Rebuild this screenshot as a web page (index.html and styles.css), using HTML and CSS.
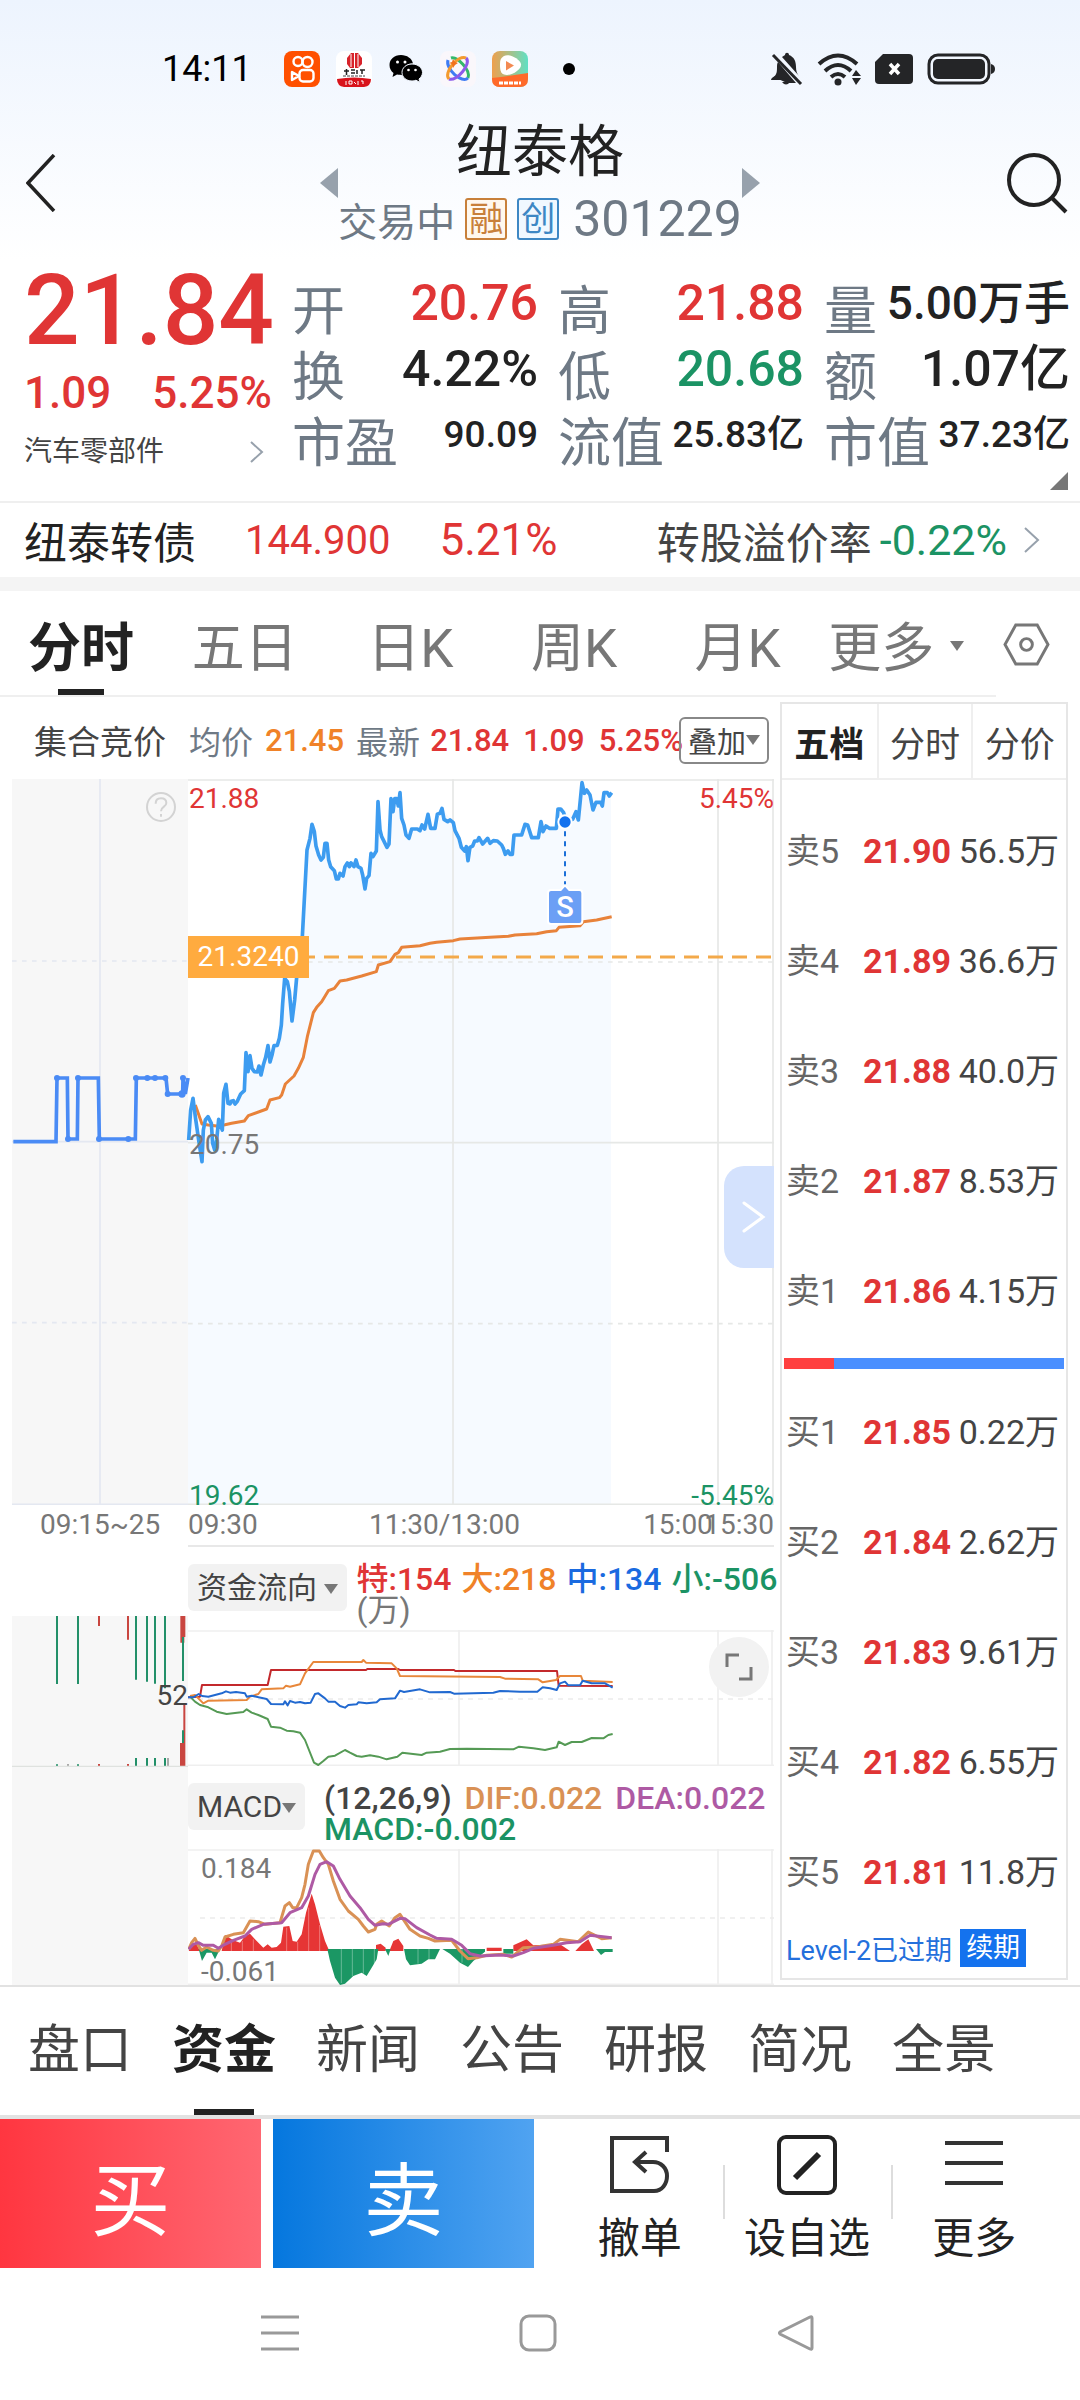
FILE: index.html
```html
<!DOCTYPE html>
<html lang="zh-CN">

<head>
  <meta charset="UTF-8">
  <meta name="viewport" content="width=device-width, initial-scale=1.0">
  <link rel="stylesheet" href="styles.css">
  <title>纽泰格 301229</title>
</head>

<body>
  <header class="top">
    <div class="status-bar">
      <span class="clock">14:11</span>
      <svg class="app-icon" viewBox="0 0 36 36">
        <rect width="36" height="36" rx="8" fill="#ff5000"/>
        <g fill="none" stroke="#fff" stroke-width="2.4">
          <circle cx="14" cy="10.500" r="4.500"/>
          <circle cx="23.500" cy="11" r="5"/>
          <rect x="15.500" y="19" width="14" height="11.500" rx="3.500"/>
          <path d="M15 25l-7-4v8z" stroke-linejoin="round"/>
        </g>
      </svg>
      <svg class="app-icon" viewBox="0 0 36 36">
        <rect width="36" height="36" rx="8" fill="#fff"/>
        <path d="M15 2h7l4 5v6l-4 4h-8l-3-4V7z" fill="#d8222a"/>
        <path d="M15 3v13M18.500 2v15M22 3v13" stroke="#fff" stroke-width="1"/>
        <path d="M8 20h5M10.500 18v6M15 19h4M15 22h4M21 19v4M24 19h5M26 19v4" stroke="#222" stroke-width="1.500"/>
        <path d="M7 25h22" stroke="#444" stroke-width="1" stroke-dasharray="3 1"/>
        <path d="M1 28q17-3 34 0q0 7-7 8H8q-7-1-7-8z" fill="#d8141c"/>
        <path d="M10 30v4M13 30h3v3h-3zM18 31l2 2M22 30v4M25 30h2v3" stroke="#fff" fill="none" stroke-width="1"/>
      </svg>
      <svg class="app-icon" viewBox="0 0 36 36">
        <path d="M13 4C6 4 1.500 8.500 1.500 14c0 3.500 1.500 6 4 8l-1 4 4.500-2.500c5 1 7 .5 7 .5-3-7 3-12 9-11.500C24 7.500 19 4 13 4z"/>
        <path d="M24 13c-6 0-10 4-10 8.500S18 30 24 30c1.500 0 3-.3 4-.8l4 2.300-1-3.500c2-1.500 3.500-4 3.500-6.500C34.500 17 30 13 24 13z" stroke="#f0f6fe" stroke-width="1"/>
        <g fill="#fff"><circle cx="9.500" cy="11" r="1.500"/><circle cx="17" cy="11" r="1.500"/><circle cx="20.500" cy="19" r="1.300"/><circle cx="27.500" cy="19" r="1.300"/></g>
      </svg>
      <svg class="app-icon" viewBox="0 0 36 36">
        <rect width="36" height="36" rx="8" fill="#faf7fb"/>
        <g fill="none" stroke-width="3">
          <path d="M11 7C17 5 31 19 28 27" stroke="#34b96b"/>
          <path d="M28 27C22 33 5 18 8 9" stroke="#3f7cf3"/>
          <path d="M26 7C32 12 17 31 9 28" stroke="#8d5bea"/>
          <path d="M9 28C3 22 18 3 26 7" stroke="#f49a2e"/>
        </g>
        <path d="M13 8l2 3 3 1-3 2-2 3-1-4-3-1 3-1z" fill="#f2711c"/>
      </svg>
      <svg class="app-icon" viewBox="0 0 36 36">
        <defs>
          <linearGradient id="play" x1="0" y1="0" x2="1" y2="0">
            <stop offset="0" stop-color="#ef9f4c"/>
            <stop offset="1" stop-color="#5fe0c4"/>
          </linearGradient>
        </defs>
        <rect width="36" height="36" rx="8" fill="url(#play)"/>
        <path d="M0 27q18-2 36-5v6q0 8-8 8H8q-8 0-8-8z" fill="#ff6a2a"/>
        <path d="M12 5c5-3 16 3 17 8s-8 11-14 11-7-4-7-10 1-7 4-9z" fill="#fff"/>
        <path d="M14 10l8 4.500-8 5z" fill="#f38a52"/>
        <path d="M7 32h22" stroke="#fff" stroke-width="3" stroke-dasharray="4 1"/>
      </svg>
      <span class="dot"></span>
      <svg class="sys-icons" viewBox="0 0 226 36" fill="#242527">
        <path d="M4 26c3-3 3-6 3-10 0-2 0-3 1-5l18 21h-9 0zM12 6c1-1 2-1 3-2 0-3 4-3 4 0 5 2 7 6 7 12 0 4 1 7 3 9z"/>
        <path d="M1 29q0-2 4-4l14 4zM12 31h8q-4 5-8 0z"/>
        <path d="M3 4l28 29" stroke="#242527" stroke-width="3"/>
        <g fill="none" stroke="#242527" stroke-width="4">
          <path d="M49 13q19-17 38 0"/><path d="M55 20q13-12 26 0"/><path d="M61 26q7-6 14 0"/>
        </g>
        <circle cx="68" cy="31" r="3.500"/>
        <path d="M82 25l4-6 5 6zM82 27h9l-5 7z"/>
        <path d="M113 3h26q4 0 4 4v22q0 4-4 4h-30q-4 0-4-4V11z"/>
        <path d="M120 13l9 10M129 13l-9 10" stroke="#fff" stroke-width="3.500"/>
        <rect x="159" y="4" width="60" height="28" rx="9" fill="none" stroke="#242527" stroke-width="3"/>
        <rect x="163" y="8" width="52" height="20" rx="5"/>
        <path d="M221 13q4 1 4 5t-4 5z"/>
      </svg>
    </div>

    <div class="title-bar">
      <button class="icon-btn back" aria-label="返回">
        <svg viewBox="0 0 30 58"><path d="M28 1L2 29l26 28" fill="none" stroke="#222" stroke-width="3.500"/></svg>
      </button>
      <div class="stock-name">
        <svg class="tri" viewBox="0 0 18 30"><path d="M18 0v30L0 15z" fill="#97a1ac"/></svg>
        <div>
          <h1>纽泰格</h1>
          <p class="sub">交易中 <span class="tag tag-orange">融</span> <span class="tag tag-blue">创</span> <span class="code">301229</span></p>
        </div>
        <svg class="tri" viewBox="0 0 18 30"><path d="M0 0v30l18-15z" fill="#97a1ac"/></svg>
      </div>
      <button class="icon-btn search" aria-label="搜索">
        <svg viewBox="0 0 62 62"><g fill="none" stroke="#222" stroke-width="4"><circle cx="28" cy="28" r="25"/><path d="M46 46l14 14"/></g></svg>
      </button>
    </div>
  </header>

  <section class="quote">
    <div class="quote-main">
      <div class="price up">21.84</div>
      <div class="change up"><span>1.09</span><span>5.25%</span></div>
      <a class="industry" href="#">汽车零部件
        <svg viewBox="0 0 14 22"><path d="M1 1l11 10L1 21" fill="none" stroke="#97a1ac" stroke-width="2"/></svg>
      </a>
    </div>
    <dl class="quote-col">
      <div><dt>开</dt><dd class="up">20.76</dd></div>
      <div><dt>换</dt><dd>4.22%</dd></div>
      <div><dt>市盈</dt><dd class="small">90.09</dd></div>
    </dl>
    <dl class="quote-col">
      <div><dt>高</dt><dd class="up">21.88</dd></div>
      <div><dt>低</dt><dd class="down">20.68</dd></div>
      <div><dt>流值</dt><dd class="small">25.83亿</dd></div>
    </dl>
    <dl class="quote-col">
      <div><dt>量</dt><dd class="tight">5.00万手</dd></div>
      <div><dt>额</dt><dd>1.07亿</dd></div>
      <div><dt>市值</dt><dd class="small">37.23亿</dd></div>
    </dl>
    <span class="corner"></span>
  </section>

  <a class="bond" href="#">
    <span>纽泰转债</span>
    <span class="bond-price up">144.900</span>
    <span class="bond-pct up">5.21%</span>
    <span class="bond-label">转股溢价率</span>
    <span class="down">-0.22%</span>
    <svg viewBox="0 0 16 26"><path d="M1 1l13 12L1 25" fill="none" stroke="#97a1ac" stroke-width="2"/></svg>
  </a>

  <div class="period">
    <nav class="period-tabs">
      <button class="active">分时</button>
      <button>五日</button>
      <button>日K</button>
      <button>周K</button>
      <button>月K</button>
      <button>更多<span class="caret"></span></button>
    </nav>
    <button class="icon-btn settings" aria-label="设置">
      <svg viewBox="0 0 48 44"><g fill="none" stroke="#777" stroke-width="3"><path d="M13 2h22l11 20-11 20H13L2 22z"/><circle cx="24" cy="22" r="6"/></g></svg>
    </button>
  </div>

  <main class="trade">
    <section class="charts">
      <div class="info">
        <span class="info-auction">集合竞价</span>
        <span class="muted">均价</span><b class="orange">21.45</b>
        <span class="muted">最新</span><b class="up">21.84</b><b class="up wide">1.09</b><b class="up wide">5.25%</b>
        <button class="overlay-btn">叠加<span class="caret"></span></button>
      </div>

      <div class="price-chart">
        <svg viewBox="36 27 2286 2178">
          <rect x="36" y="27" width="528" height="2178" fill="#f7f7f7"/>
          <path d="M564 1105 572 1020 579 985 586 1040 596 1110 606 1175 610 1080 616 1050 624 1040 634 1060 638 1120 644 1140 650 1110 656 1048 667 1080 671 970 678 943 684 1000 700 992 712 994 733 962 738 848 750 857 756 895 772 906 783 915 797 862 804 827 810 876 822 827 838 805 848 700 854 625 876 753 892 600 907 500 921 240 936 163 948 228 963 270 975 220 981 220 992 290 1009 327 1029 318 1042 279 1068 270 1083 295 1095 357 1107 317 1113 250 1129 243 1134 95 1145 200 1161 232 1173 86 1195 108 1200 68 1205 145 1218 195 1266 165 1312 170 1326 115 1360 158 1384 232 1404 272 1437 203 1492 213 1516 253 1537 253 1542 195 1575 165 1595 203 1623 155 1669 175 1674 117 1735 150 1746 38 1779 120 1812 68 1833 68V2205H564z" fill="#f6faff"/>
          <g fill="none" stroke="#e6e8e6" stroke-width="5">
            <path d="M564 30H2322M564 1118H2322M564 2203H2322M1359 27V2205M2154 27V2205M2319 27V2205"/>
            <path d="M564 576H2322M564 1661H2322" stroke-dasharray="14 16"/>
          </g>
          <g fill="none" stroke="#e4e8f1" stroke-width="5">
            <path d="M300 27V2205M36 1115H564M36 2203H564"/>
            <path d="M36 573H564M36 1658H564" stroke-dasharray="14 16"/>
          </g>
          <g stroke="#4a8bf5" fill="#4a8bf5" stroke-width="11">
            <path d="M40 1115H168L171 924H202L204 1107H232L234 924H295L298 1107H406L409 924H498L503 972H548L549 924L556 972L564 924" fill="none"/>
            <g stroke="none">
              <circle cx="171" cy="924" r="9"/><circle cx="204" cy="1107" r="9"/><circle cx="234" cy="924" r="9"/><circle cx="297" cy="1107" r="9"/><circle cx="385" cy="1107" r="9"/><circle cx="408" cy="924" r="9"/><circle cx="442" cy="924" r="9"/><circle cx="465" cy="924" r="9"/><circle cx="496" cy="924" r="9"/><circle cx="503" cy="972" r="9"/><circle cx="546" cy="972" r="11"/><circle cx="549" cy="924" r="9"/>
            </g>
          </g>
          <path d="M900 561H2322" stroke="#f3a94a" stroke-width="9" stroke-dasharray="45 27" fill="none"/>
          <path d="M586 1005 606 1062 625 1065 650 1068 675 1064 695 1060 733 1053 745 1037 800 1017 810 990 838 983 845 975 856 942 882 918 895 895 910 862 922 800 940 728 950 712 965 695 985 662 1003 655 1020 633 1040 630 1085 618 1129 605 1135 585 1170 575 1185 553 1195 548 1205 532 1260 527 1290 520 1310 517 1360 512 1380 507 1470 502 1525 499 1545 495 1610 491 1640 485 1669 482 1677 472 1740 467 1750 455 1790 450 1835 440" fill="none" stroke="#e8823a" stroke-width="9" stroke-linejoin="round"/>
          <path d="M566 1110 572 1020 579 985 586 1040 596 1110 606 1175 610 1080 616 1050 624 1040 634 1060 638 1120 644 1140 650 1110 656 1048 661 1065 667 1080 671 970 678 943 684 1000 690 1002 694 994 700 992 705 1002 712 994 722 972 733 962 738 848 744 905 750 857 756 895 763 905 772 906 777 888 783 915 790 885 797 862 804 827 810 876 816 855 822 827 832 826 838 805 844 765 848 700 854 625 862 635 868 665 876 753 884 690 892 600 907 500 921 240 930 205 936 163 943 185 948 228 956 255 963 270 970 262 975 220 981 220 986 270 992 290 1003 302 1009 327 1015 327 1020 310 1029 318 1035 290 1042 279 1048 290 1053 279 1062 290 1068 270 1074 290 1083 295 1088 315 1095 357 1100 325 1107 317 1113 250 1119 260 1129 243 1134 95 1140 180 1145 200 1161 232 1167 222 1173 86 1179 125 1184 86 1190 86 1195 108 1200 68 1205 145 1212 165 1218 195 1227 205 1235 177 1252 177 1260 182 1266 165 1274 177 1284 133 1292 175 1305 175 1312 133 1320 130 1326 115 1332 148 1343 155 1350 150 1360 158 1365 182 1377 205 1384 232 1394 243 1399 230 1404 272 1410 232 1418 228 1424 213 1432 213 1437 203 1448 222 1463 205 1470 220 1480 212 1492 213 1505 225 1510 235 1516 253 1524 243 1530 253 1537 253 1542 195 1565 195 1575 163 1583 165 1595 203 1615 203 1623 155 1629 185 1638 168 1648 175 1669 175 1674 117 1682 117 1691 128 1697 150 1718 148 1728 125 1735 150 1741 90 1746 38 1753 70 1760 60 1770 75 1779 120 1788 97 1802 97 1807 108 1812 68 1822 68 1828 78 1835 68" fill="none" stroke="#3d9cf0" stroke-width="11" stroke-linejoin="round"/>
          <circle cx="1695" cy="156" r="20" fill="#1472ee" stroke="#fff" stroke-width="6"/>
          <path d="M1695 184V350" stroke="#1b6fd8" stroke-width="6" stroke-dasharray="15 15"/>
          <path d="M1644 369q0-9 9-9H1682L1695 346 1708 360H1738q9 0 9 9V453q0 9-9 9H1653q-9 0-9-9z" fill="#6b9ff5" stroke="#fff" stroke-width="6"/>
          <g fill="none" stroke="#d3d3d3" stroke-width="6">
            <circle cx="483" cy="111" r="42"/>
            <path d="M467 101q0-16 16-16t16 14c0 12-16 10-16 25M483 132v8"/>
          </g>
        </svg>
        <span class="label left first up">21.88</span>
        <span class="label right first up">5.45%</span>
        <span class="label left middle">20.75</span>
        <span class="label left last down">19.62</span>
        <span class="label right last down">-5.45%</span>
        <span class="cost">21.3240</span>
        <span class="sell-mark">S</span>
        <button class="handle" aria-label="展开">
          <svg viewBox="0 0 24 32"><path d="M2 2l19 14L2 30" fill="none" stroke="#fff" stroke-width="3" stroke-linecap="round"/></svg>
        </button>
      </div>

      <div class="axis">
        <span class="axis-auction">09:15~25</span>
        <div class="axis-times">
          <span>09:30</span>
          <span class="noon">11:30/13:00</span>
          <span class="close">15:00</span>
          <span class="after">15:30</span>
        </div>
      </div>

      <div class="indicators">
        <div class="auction">
          <svg viewBox="36 255 528 453">
            <g stroke="#239069" stroke-width="6">
              <path d="M171 255V459M234 255V459M408 255V446M441 255V452M465 255V458M495 255V472M408 681V705M441 681V705M465 681V705M495 681V705M171 700V705M234 700V705"/>
            </g>
            <g stroke="#c94640" stroke-width="6">
              <path d="M297 255V285M384 255V326M297 699V705M384 699V705M553 518V705"/>
              <path d="M547 255V335M546 636V705" stroke-width="12"/>
              <path d="M553 255V318"/>
            </g>
            <path d="M549 318V450M549 598V636" stroke="#239069" stroke-width="6"/>
            <path d="M504 681V705M204 699V705" stroke="#aaa" stroke-width="6"/>
            <path d="M36 707H564" stroke="#dfe2df" stroke-width="5"/>
          </svg>
          <span class="volume">52</span>
        </div>
        <div>
          <div class="ind-head">
            <button class="ind-btn">资金流向 <span class="caret"></span></button>
            <div class="legend">
              <p><span class="up">特:154</span><span class="orange">大:218</span><span class="blue">中:134</span><span class="down">小:-506</span></p>
              <p class="unit">(万)</p>
            </div>
          </div>
          <div class="ind-chart">
            <svg viewBox="564 300 1758 408">
              <path d="M564 303H2322M564 706H2322M1377 300V708M2154 300V708M2316 300V708" stroke="#efefef" stroke-width="5"/>
              <path d="M564 507H2322" stroke="#ececec" stroke-width="5" stroke-dasharray="15 15"/>
              <g fill="none" stroke-width="6" stroke-linejoin="round">
                <path d="M564 502 600 500 606 465 803 465 813 420 1098 420 1102 417 1195 417 1200 420 1362 420 1366 423 1671 423 1676 467 1838 468" stroke="#c3292c"/>
                <path d="M570 498 585 495 598 508 610 520 625 512 740 510 750 500 775 492 785 478 850 475 858 467 870 470 900 463 915 430 940 396 1085 396 1090 390 1098 398 1175 400 1190 415 1200 438 1500 441 1515 446 1615 448 1628 457 1668 450 1680 438 1743 438 1748 452 1838 456" stroke="#e8873a"/>
                <path d="M570 500 585 515 600 525 625 532 650 545 680 552 730 546 740 538 755 548 775 555 803 567 813 590 840 593 860 602 880 604 900 608 915 630 942 698 955 705 970 693 985 680 1005 677 1035 660 1050 668 1070 678 1085 680 1110 676 1135 680 1160 688 1192 680 1207 668 1265 675 1280 668 1320 665 1350 657 1400 656 1540 658 1557 650 1600 655 1635 660 1670 652 1676 635 1695 645 1715 636 1745 636 1775 624 1810 625 1825 615 1838 612" stroke="#559a55"/>
                <path d="M564 502 580 502 596 492 606 498 625 500 645 495 665 490 678 484 690 488 708 486 735 490 740 500 755 497 800 507 813 522 850 523 855 514 863 526 870 513 885 518 900 516 915 520 932 518 945 492 955 490 975 505 985 515 1005 515 1020 528 1035 533 1045 525 1070 523 1075 517 1100 520 1130 517 1140 508 1185 505 1200 482 1212 486 1260 478 1290 487 1350 486 1362 491 1480 488 1500 483 1560 485 1612 485 1628 472 1650 475 1670 480 1680 460 1695 455 1705 466 1740 466 1748 452 1775 460 1815 460 1838 473" stroke="#2169d0"/>
              </g>
            </svg>
            <button class="expand" aria-label="全屏">
              <svg viewBox="0 0 28 28"><path d="M2 14V2h12M26 14v12H14" fill="none" stroke="#777" stroke-width="3"/></svg>
            </button>
          </div>
          <div class="ind-head">
            <button class="ind-btn">MACD<span class="caret"></span></button>
            <div class="legend macd">
              <p><span>(12,26,9)</span><span class="dif">DIF:0.022</span><span class="dea">DEA:0.022</span></p>
              <p class="down">MACD:-0.002</p>
            </div>
          </div>
          <div class="ind-chart">
            <svg viewBox="564 954 1758 408">
              <path d="M564 957H2322M564 1360H2322M1377 954V1362M2154 954V1362M2316 954V1362" stroke="#efefef" stroke-width="5"/>
              <path d="M600 1161H2322" stroke="#ececec" stroke-width="5" stroke-dasharray="15 15"/>
              <g fill="#e63535">
                <path d="M566 1260 575 1240 590 1240 600 1260zM665 1260 675 1212 700 1228 720 1235 735 1215 750 1208 765 1225 790 1250 803 1240 815 1250 830 1248 843 1235 850 1187 868 1185 878 1230 890 1232 905 1210 918 1145 935 1088 945 1120 960 1180 975 1230 988 1260z"/>
                <path d="M1128 1260V1242L1142 1238 1157 1250V1260zM1168 1260 1180 1230 1195 1223 1210 1245V1260zM1460 1260V1250H1505V1260zM1540 1260V1243L1580 1225 1600 1243 1680 1240 1710 1260zM1726 1260 1745 1240 1765 1225 1782 1260z"/>
              </g>
              <g fill="#1b9764">
                <path d="M596 1254 606 1290 620 1265 635 1265 645 1285 660 1254zM982 1254 990 1290 1005 1340 1020 1362 1035 1358 1060 1335 1085 1325 1100 1335 1115 1310 1130 1285 1135 1254zM1155 1254 1165 1275 1172 1254z"/>
                <path d="M1212 1254 1218 1285 1230 1303 1265 1298 1285 1285 1305 1285 1320 1254zM1327 1254 1350 1268 1380 1295 1404 1308 1420 1290 1455 1262V1254zM1510 1254V1268H1540V1254zM1788 1254 1803 1272 1815 1263H1838V1254z"/>
              </g>
              <!-- thin gaps between groups of bars -->
              <path d="M694 1228V1260M727 1230V1260M760 1225V1260M860 1190V1260M893 1232V1260M926 1130V1260M959 1182V1260M1024 1254V1356M1057 1254V1336M1090 1254V1328M1123 1254V1298M1254 1254V1298M1287 1254V1284M1386 1254V1295" stroke="#fff" stroke-width="2" opacity=".5"/>
              <g fill="none" stroke-width="9" stroke-linejoin="round">
                <path d="M566 1255 575 1235 585 1222 595 1243 605 1258 620 1248 640 1258 655 1260 665 1245 675 1218 700 1210 730 1205 750 1170 775 1172 795 1180 840 1175 855 1125 868 1115 878 1130 890 1130 905 1100 915 1060 925 1000 940 960 958 960 970 980 985 1000 1000 1050 1020 1105 1045 1140 1075 1165 1090 1185 1105 1203 1125 1195 1130 1180 1145 1170 1168 1185 1185 1160 1200 1150 1210 1165 1230 1195 1260 1215 1285 1222 1305 1230 1355 1228 1380 1260 1404 1283 1430 1280 1460 1273 1510 1270 1535 1278 1570 1250 1610 1248 1660 1240 1680 1225 1735 1232 1765 1203 1805 1223 1835 1220" stroke="#d99155"/>
                <path d="M566 1255 580 1240 595 1235 610 1243 640 1243 655 1252 675 1240 700 1228 735 1215 755 1195 790 1180 845 1175 870 1145 905 1130 925 1095 945 1030 960 1000 980 992 1000 1005 1020 1045 1050 1095 1080 1130 1105 1165 1125 1183 1150 1178 1165 1180 1200 1162 1215 1163 1250 1190 1290 1212 1310 1222 1355 1225 1385 1243 1410 1268 1440 1275 1500 1272 1540 1275 1570 1265 1600 1252 1660 1243 1700 1235 1740 1232 1770 1213 1835 1220" stroke="#ae5aa4"/>
              </g>
            </svg>
            <span class="label macd-max">0.184</span>
            <span class="label macd-min">-0.061</span>
          </div>
        </div>
      </div>
    </section>

    <aside class="book">
      <nav class="book-tabs">
        <button class="active">五档</button>
        <button>分时</button>
        <button>分价</button>
      </nav>
      <table class="asks">
        <tr><th>卖5</th><td class="up">21.90</td><td>56.5万</td></tr>
        <tr><th>卖4</th><td class="up">21.89</td><td>36.6万</td></tr>
        <tr><th>卖3</th><td class="up">21.88</td><td>40.0万</td></tr>
        <tr><th>卖2</th><td class="up">21.87</td><td>8.53万</td></tr>
        <tr><th>卖1</th><td class="up">21.86</td><td>4.15万</td></tr>
      </table>
      <div class="ratio"><span style="width: 18%"></span></div>
      <table>
        <tr><th>买1</th><td class="up">21.85</td><td>0.22万</td></tr>
        <tr><th>买2</th><td class="up">21.84</td><td>2.62万</td></tr>
        <tr><th>买3</th><td class="up">21.83</td><td>9.61万</td></tr>
        <tr><th>买4</th><td class="up">21.82</td><td>6.55万</td></tr>
        <tr><th>买5</th><td class="up">21.81</td><td>11.8万</td></tr>
      </table>
      <div class="level2">Level-2已过期 <button>续期</button></div>
    </aside>
  </main>

  <nav class="info-tabs">
    <button>盘口</button>
    <button class="active">资金</button>
    <button>新闻</button>
    <button>公告</button>
    <button>研报</button>
    <button>简况</button>
    <button>全景</button>
  </nav>

  <footer>
    <div class="actions">
      <button class="deal buy">买</button>
      <button class="deal sell">卖</button>
      <div class="tools">
        <button>
          <svg viewBox="0 0 60 60"><g fill="none" stroke="#333" stroke-width="4"><path d="M57 17V3H2V56H44c8 0 13-7 13-15s-6-14-14-14H26"/><path d="M36 17L25 27l11 10"/></g></svg>
          撤单
        </button>
        <button>
          <svg viewBox="0 0 60 60"><g fill="none" stroke="#222" stroke-width="4"><rect x="2" y="2" width="56" height="56" rx="7"/><path d="M18 43L42 19" stroke-width="6"/></g></svg>
          设自选
        </button>
        <button>
          <svg viewBox="0 0 60 60"><path d="M1 8h58M1 28h58M1 48h58" stroke="#333" stroke-width="4"/></svg>
          更多
        </button>
      </div>
    </div>
    <div class="sys-nav">
      <svg viewBox="0 0 38 38"><path d="M0 3h38M0 19h38M0 35h38" stroke="#999" stroke-width="3"/></svg>
      <svg viewBox="0 0 38 38"><rect x="2" y="2" width="34" height="34" rx="8" fill="none" stroke="#999" stroke-width="3"/></svg>
      <svg viewBox="0 0 38 38"><path d="M35 4v30q0 2-2 1L3 20q-1-1 0-2L33 3q2-1 2 1z" fill="none" stroke="#999" stroke-width="3"/></svg>
    </div>
  </footer>
</body>

</html>
```
FILE: styles.css
```css
* {
  box-sizing: border-box;
}

body {
  margin: 0;
  background: #fff;
  color: #222;
  font-family: Roboto, "Noto Sans CJK SC", sans-serif;
}

button {
  margin: 0;
  padding: 0;
  border: none;
  background: none;
  color: inherit;
  font: inherit;
  white-space: nowrap;
}

a {
  color: inherit;
  text-decoration: none;
}

svg {
  display: block;
  flex-shrink: 0;
}

h1, p, dl, dd {
  margin: 0;
}

b {
  font-weight: 500;
}

.up { color: #e03535; }
.down { color: #1b9364; }
.orange { color: #f08228; }
.blue { color: #1a6ae0; }
.muted { color: #6e7985; }

.caret {
  display: inline-block;
  border: 7px solid transparent;
  border-top: 10px solid #777;
  border-bottom: none;
}

/* status bar and title */
.top {
  height: 260px;
  padding-top: 50px;
  background: linear-gradient(#edf4fe, #fff);
}

.status-bar {
  display: flex;
  align-items: center;
  height: 38px;
  padding: 0 84px 0 162px;
}

.clock {
  width: 122px;
  font-size: 36px;
  line-height: 38px;
  color: #000;
}

.app-icon {
  width: 36px;
  height: 36px;
  margin-right: 16px;
}

.dot {
  width: 12px;
  height: 12px;
  margin-left: 19px;
  border-radius: 50%;
  background: #000;
}

.sys-icons {
  width: 226px;
  height: 36px;
  margin-left: auto;
}

.title-bar {
  display: flex;
  justify-content: space-between;
  padding: 28px 12px 0 26px;
}

.back {
  width: 48px;
  height: 58px;
  margin-top: 38px;
}

.back svg {
  width: 30px;
  height: 58px;
}

.search {
  width: 62px;
  height: 62px;
  margin-top: 36px;
}

.stock-name {
  display: flex;
  text-align: center;
}

.tri {
  width: 18px;
  height: 30px;
  margin-top: 52px;
}

h1 {
  font-size: 56px;
  font-weight: 400;
  line-height: 72px;
}

.sub {
  display: flex;
  align-items: center;
  gap: 10px;
  height: 62px;
  font-size: 39px;
  color: #6e7985;
}

.tag {
  width: 42px;
  height: 42px;
  border: 2px solid;
  border-radius: 3px;
  font-size: 34px;
  line-height: 38px;
}

.tag-orange {
  color: #c8803a;
  background: #fff8ee;
}

.tag-blue {
  color: #3d87c4;
  background: #f0f8ff;
}

.code {
  margin-left: 4px;
  font-size: 50px;
}

/* quote */
.quote {
  position: relative;
  display: grid;
  grid-template-columns: 248px 1fr 1fr 1fr;
  column-gap: 20px;
  height: 243px;
  padding: 8px 10px 0 24px;
  border-bottom: 2px solid #efefef;
}

.price {
  font-size: 98px;
  font-weight: 500;
  line-height: 86px;
}

.change {
  display: flex;
  justify-content: space-between;
  margin-top: 14px;
  font-size: 44px;
  font-weight: 500;
  line-height: 50px;
}

.industry {
  display: flex;
  align-items: center;
  justify-content: space-between;
  margin-top: 14px;
  padding-right: 8px;
  font-size: 28px;
  line-height: 40px;
  color: #444;
}

.industry svg {
  width: 14px;
  height: 22px;
}

.quote-col {
  min-width: 0;
  margin-top: 10px;
  white-space: nowrap;
}

.quote-col div {
  display: flex;
  justify-content: space-between;
  height: 66px;
}

.quote-col dt {
  font-size: 53px;
  line-height: 68px;
  color: #6e7985;
}

.quote-col dd {
  font-size: 50px;
  font-weight: 500;
  line-height: 50px;
}

.quote-col .small {
  font-size: 37px;
}

.quote-col .tight {
  font-size: 46px;
}

.corner {
  position: absolute;
  right: 12px;
  bottom: 11px;
  border-left: 18px solid transparent;
  border-bottom: 18px solid #777;
}

.bond {
  display: flex;
  align-items: center;
  height: 88px;
  padding: 0 40px 0 24px;
  border-bottom: 14px solid #f4f4f4;
  font-size: 43px;
}

.bond-price {
  margin-left: 49px;
  font-size: 40px;
}

.bond-pct {
  margin-left: 49px;
  font-size: 44px;
}

.bond-label {
  margin-left: auto;
  margin-right: 8px;
  color: #444;
}

.bond svg {
  width: 16px;
  height: 26px;
  margin-left: 17px;
}

/* period tabs */
.period {
  display: flex;
  height: 106px;
  padding-right: 30px;
}

.period-tabs {
  display: grid;
  grid-template-columns: 164fr 176fr 164fr 164fr 134fr 168fr;
  flex: 1;
  padding-left: 28px;
  border-bottom: 2px solid #efefef;
  font-size: 53px;
  color: #777;
}

.period-tabs button {
  position: relative;
  justify-self: start;
  padding-top: 12px;
  line-height: 92px;
}

.period-tabs .caret {
  margin-left: 16px;
  vertical-align: 16px;
}

.active {
  color: #222;
  font-weight: 700;
}

.period-tabs .active::after,
.info-tabs .active::after {
  content: "";
  position: absolute;
  left: 30px;
  right: 30px;
  bottom: 0;
  height: 6px;
  background: #222;
}

.settings {
  margin-left: 7px;
}

.settings svg {
  width: 47px;
  height: 43px;
}

/* charts */
.trade {
  display: flex;
  gap: 6px;
  padding: 0 12px;
  border-bottom: 2px solid #e2e2e2;
}

.charts {
  flex: 1;
  min-width: 0;
}

.info {
  display: flex;
  align-items: center;
  height: 82px;
  padding: 4px 0 0 22px;
  font-size: 32px;
  white-space: nowrap;
}

.info-auction {
  margin-right: 23px;
  font-size: 33px;
  color: #444;
}

.info b {
  margin: 0 12px;
  font-size: 31px;
}

.info b.up {
  margin: 0 0 0 10px;
}

.info b.wide {
  margin-left: 14px;
}

.overlay-btn {
  flex-shrink: 0;
  width: 90px;
  height: 47px;
  margin-left: -4px;
  border: 2px solid #888;
  border-radius: 6px;
  font-size: 29px;
  color: #444;
}

.overlay-btn .caret {
  vertical-align: 8px;
}

.price-chart,
.ind-chart {
  position: relative;
}

.price-chart > svg,
.ind-chart > svg,
.auction > svg {
  width: 100%;
}

.label {
  position: absolute;
  font-size: 28px;
  line-height: 32px;
}

.left { left: 177px; }
.right { right: 0; }
.first { top: 4px; }
.last { bottom: -7px; }

.middle {
  top: calc(50% - 13px);
  color: #777;
}

.cost {
  position: absolute;
  left: 176px;
  top: 157px;
  width: 121px;
  font-size: 28px;
  line-height: 42px;
  text-align: center;
  color: #fff;
  background: #ffab3f;
}

.sell-mark {
  position: absolute;
  left: 536px;
  top: 111px;
  width: 34px;
  font-size: 29px;
  font-weight: 500;
  line-height: 34px;
  text-align: center;
  color: #fff;
}

.handle {
  position: absolute;
  right: 0;
  top: 387px;
  width: 50px;
  height: 102px;
  padding-left: 18px;
  border-radius: 20px 0 0 20px;
  background: #d4e2fd;
}

.handle svg {
  width: 24px;
  height: 32px;
}

.axis {
  display: grid;
  grid-template-columns: 176px 1fr;
  font-size: 28px;
  line-height: 40px;
  color: #777;
}

.axis-auction {
  padding-left: 28px;
}

.axis-times {
  position: relative;
  display: flex;
  border-bottom: 2px solid #e8e8e8;
}

.noon {
  margin-left: 19%;
}

.close {
  margin-left: 21%;
}

.after {
  position: absolute;
  right: 0;
}

.indicators {
  display: grid;
  grid-template-columns: 176px minmax(0, 1fr);
}

.auction {
  position: relative;
  margin-top: 69px;
  background: #f7f7f7;
}

.volume {
  position: absolute;
  right: 0;
  top: 63px;
  font-size: 28px;
  line-height: 34px;
  color: #444;
}

.ind-head {
  display: flex;
  align-items: flex-start;
  height: 83px;
  padding-top: 17px;
}

.ind-btn {
  flex-shrink: 0;
  height: 47px;
  padding: 0 9px;
  border-radius: 6px;
  background: #f2f2f2;
  font-size: 30px;
  line-height: 47px;
  color: #444;
}

.ind-btn .caret {
  vertical-align: 4px;
}

.legend {
  margin-left: 9px;
  font-size: 32px;
  font-weight: 500;
  line-height: 31px;
  white-space: nowrap;
  color: #444;
}

.legend p {
  display: flex;
  gap: 10px;
}

.legend .unit {
  color: #777;
  font-weight: 400;
}

.macd {
  margin-left: 19px;
}

.macd p {
  gap: 13px;
}

.dif { color: #d99155; }
.dea { color: #ae5aa4; }

.expand {
  position: absolute;
  right: 5px;
  top: 7px;
  width: 60px;
  height: 60px;
  padding: 16px;
  border-radius: 50%;
  background: #f2f2f2;
}

.macd-max,
.macd-min {
  left: 13px;
  color: #777;
}

.macd-max { top: 4px; }
.macd-min { bottom: -3px; }

/* order book */
.book {
  width: 288px;
  margin: 5px 0;
  border: 2px solid #e6e6e6;
  font-size: 34px;
}

.book-tabs {
  display: grid;
  grid-template-columns: repeat(3, 1fr);
  height: 76px;
  border-bottom: 2px solid #efefef;
  font-size: 35px;
  color: #444;
}

.book-tabs button + button {
  border-left: 2px solid #efefef;
}

.book-tabs .active {
  color: #222;
}

.book table {
  width: 100%;
  border-collapse: collapse;
  table-layout: fixed;
}

.book .asks {
  margin-top: 16px;
}

.book th,
.book td {
  height: 110px;
  padding: 0;
  font-weight: 400;
  line-height: 40px;
  white-space: nowrap;
}

.book th {
  width: 81px;
  padding-left: 4px;
  text-align: left;
  color: #666;
}

.book td {
  padding-right: 7px;
  text-align: right;
  color: #444;
}

.book td.up {
  width: 90px;
  padding: 0;
  text-align: left;
  font-weight: 700;
  color: #e03535;
}

.ratio {
  height: 11px;
  margin: 12px 2px 8px;
  background: #4a8fff;
}

.ratio span {
  display: block;
  height: 100%;
  background: #ff4040;
}

.level2 {
  display: flex;
  align-items: center;
  gap: 8px;
  height: 42px;
  padding-left: 4px;
  font-size: 27px;
  white-space: nowrap;
  color: #2470dc;
}

.level2 button {
  width: 66px;
  height: 38px;
  background: #1472ee;
  line-height: 38px;
  color: #fff;
}

/* bottom */
.info-tabs {
  display: flex;
  gap: 40px;
  height: 130px;
  padding-left: 28px;
  border-bottom: 2px solid #e2e2e2;
  font-size: 52px;
  line-height: 128px;
  color: #444;
}

.info-tabs button {
  position: relative;
}

.info-tabs .active::after {
  left: 22px;
  right: 22px;
}

.actions {
  display: flex;
  height: 151px;
  border-top: 2px solid #e2e2e2;
}

.deal {
  width: 261px;
  margin-right: 12px;
  font-size: 80px;
  color: #fff;
}

.buy {
  background: linear-gradient(to right, #ff3640, #ff6772);
}

.sell {
  background: linear-gradient(to right, #0577de, #50a3f1);
}

.tools {
  display: grid;
  grid-template-columns: repeat(3, 1fr);
  flex: 1;
  padding: 16px 22px 0 10px;
  font-size: 42px;
  line-height: 60px;
}

.tools button {
  position: relative;
  display: flex;
  flex-direction: column;
  align-items: center;
  gap: 14px;
}

.tools button + button::before {
  content: "";
  position: absolute;
  left: 0;
  top: 30px;
  height: 54px;
  border-left: 2px solid #ddd;
}

.tools svg {
  width: 60px;
  height: 60px;
}

.sys-nav {
  display: flex;
  justify-content: space-between;
  padding: 46px 265px 48px 261px;
}

.sys-nav svg {
  width: 38px;
  height: 38px;
}
```
